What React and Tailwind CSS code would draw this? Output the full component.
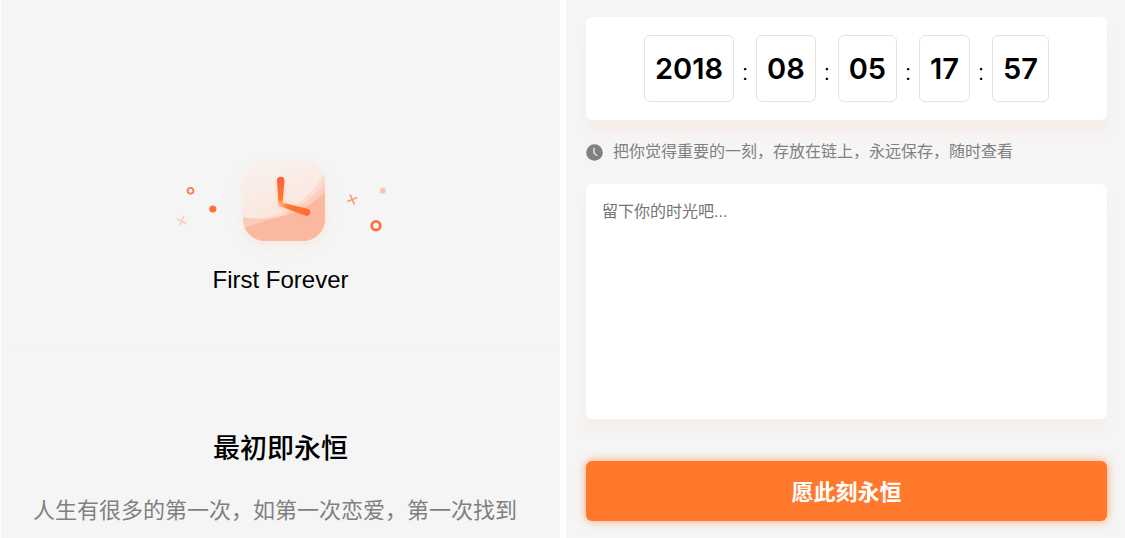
import { useState } from "react";

const moment = ["2018", "08", "05", "17", "57"];

function Logo() {
  return (
    <svg width="240" height="120" viewBox="161 140 240 120" fill="none" aria-hidden="true">
      <defs>
        <linearGradient id="face" x1="270" y1="160" x2="290" y2="225" gradientUnits="userSpaceOnUse">
          <stop offset="0" stopColor="#f8f1ee" />
          <stop offset="0.35" stopColor="#faece6" />
          <stop offset="1" stopColor="#fbe5dc" />
        </linearGradient>
        <linearGradient id="hour" x1="281" y1="177" x2="281" y2="206" gradientUnits="userSpaceOnUse">
          <stop offset="0" stopColor="#ff5a42" />
          <stop offset="0.75" stopColor="#ff7a2b" />
          <stop offset="1" stopColor="#fdb48e" />
        </linearGradient>
        <linearGradient id="minute" x1="280" y1="204" x2="310" y2="213" gradientUnits="userSpaceOnUse">
          <stop offset="0" stopColor="#fdb08a" />
          <stop offset="0.25" stopColor="#ff7a2b" />
          <stop offset="1" stopColor="#ff6a3c" />
        </linearGradient>
        <clipPath id="tile">
          <rect x="243" y="160" width="82" height="81" rx="22" />
        </clipPath>
        <filter id="glow" x="220" y="140" width="130" height="130" filterUnits="userSpaceOnUse">
          <feGaussianBlur stdDeviation="6" />
        </filter>
        <filter id="soft" x="260" y="165" width="70" height="65" filterUnits="userSpaceOnUse">
          <feGaussianBlur stdDeviation="2" />
        </filter>
      </defs>

      <rect x="242" y="166" width="84" height="80" rx="24" fill="#fbcdb8" opacity="0.28" filter="url(#glow)" />
      <g clipPath="url(#tile)">
        <rect x="243" y="160" width="82" height="81" fill="url(#face)" />
        <path d="M243 217C280 224 313 198 325 171V241H243Z" fill="#fbdcd0" />
        <path d="M243 228C262 221 276 219 291 211C306 203 318 193 325 182V241H243Z" fill="#fbcfbf" />
        <path d="M243 217C254 220 265 219 276 217C264 221 252 224 243 228Z" fill="#fbcbb9" />
        <path d="M243 228C257 223 268 220 283 216C300 212 315 202 325 192V241H243Z" fill="#fbb8a1" />
      </g>
      <path d="M281 181V205L308 213" stroke="#ff9a6a" strokeWidth="7" opacity="0.3" filter="url(#soft)" />
      <path d="M277 180.500A3.700 3.700 0 0 1 284.400 180.500L282.500 204A2 2 0 0 1 278.500 204Z" fill="url(#hour)" />
      <path d="M280.500 202.300L307.500 208.800A3.600 3.600 0 0 1 305.800 215.800L279.500 206A2 2 0 0 1 280.500 202.300Z" fill="url(#minute)" />

      <circle cx="190.500" cy="190.700" r="2.900" stroke="#fc7b4d" strokeWidth="1.800" />
      <circle cx="212.800" cy="209" r="3.600" fill="#ff6f38" />
      <path d="M177 219L186.500 223.500M183.800 216L180 225.800" stroke="#f9cfc0" strokeWidth="1.700" />
      <path d="M347.300 201.500L357.300 197.500M350 194.500L354.500 204.500" stroke="#fb9d7c" strokeWidth="1.800" />
      <circle cx="382.800" cy="190.700" r="2.900" fill="#fbc2b0" />
      <circle cx="376" cy="225.700" r="4.300" stroke="#fd713c" strokeWidth="2.800" />
    </svg>
  );
}

function ClockIcon() {
  return (
    <svg width="17" height="17" viewBox="0 0 17 17" className="shrink-0" aria-hidden="true">
      <circle cx="8.500" cy="8.500" r="8.300" fill="#808080" />
      <path d="M8 3.800V9L11 11.800" fill="none" stroke="#e2e2e2" strokeWidth="1.500" />
    </svg>
  );
}

export default function App() {
  const [note, setNote] = useState("");

  return (
    <div className="grid min-h-screen grid-cols-2 gap-1.5 bg-white pl-px font-['Liberation_Sans','Noto_Sans_CJK_SC',sans-serif] text-black">
      {/* Intro */}
      <main className="flex flex-col bg-[#f5f5f5]">
        <header className="flex flex-col items-center border-b border-[#f2f2f2] pt-35 pb-13">
          <Logo />
          <h1 className="mt-1 text-2xl leading-8">First Forever</h1>
        </header>
        <section className="px-8 pt-20">
          <h2 className="text-center text-[27px] leading-10 font-medium">最初即永恒</h2>
          <p className="mt-6.5 text-[22px] leading-8 text-[#808080]">人生有很多的第一次，如第一次恋爱，第一次找到</p>
        </section>
      </main>

      {/* Record a moment */}
      <form className="flex flex-col bg-[#f5f5f5] pt-[17px] pr-4.5 pb-[17px] pl-5" onSubmit={(e) => e.preventDefault()}>
        <div className="flex items-center justify-center rounded-md bg-white py-4.5 shadow-[0_12px_10px_#f6eeea]">
          {moment.map((part, i) => (
            <div key={i} className="flex items-center">
              {i > 0 && <span className="w-5.5 pt-2 text-center text-[22px] leading-8">:</span>}
              <span className="rounded-md border border-[#e3e3e3] px-2.5 py-4 font-['Inter',sans-serif] text-[29px] leading-[33px] font-semibold">
                {part}
              </span>
            </div>
          ))}
        </div>

        <label htmlFor="note" className="mt-5 flex items-center gap-2.5 text-base leading-6 text-[#808080]">
          <ClockIcon />
          把你觉得重要的一刻，存放在链上，永远保存，随时查看
        </label>

        <textarea
          id="note"
          rows={8}
          value={note}
          onChange={(e) => setNote(e.target.value)}
          placeholder="留下你的时光吧..."
          className="mt-5 flex-1 resize-none rounded-md bg-white px-4 py-4 text-base leading-6 shadow-[0_12px_10px_#f6eeea] outline-none placeholder:text-[#757575]"
        />

        <button
          type="submit"
          className="mt-10.5 rounded-md bg-[#ff782c] pt-4 pb-3 text-[22px] leading-8 font-bold text-white shadow-[0_0_10px_#ff782caa]"
        >
          愿此刻永恒
        </button>
      </form>
    </div>
  );
}
